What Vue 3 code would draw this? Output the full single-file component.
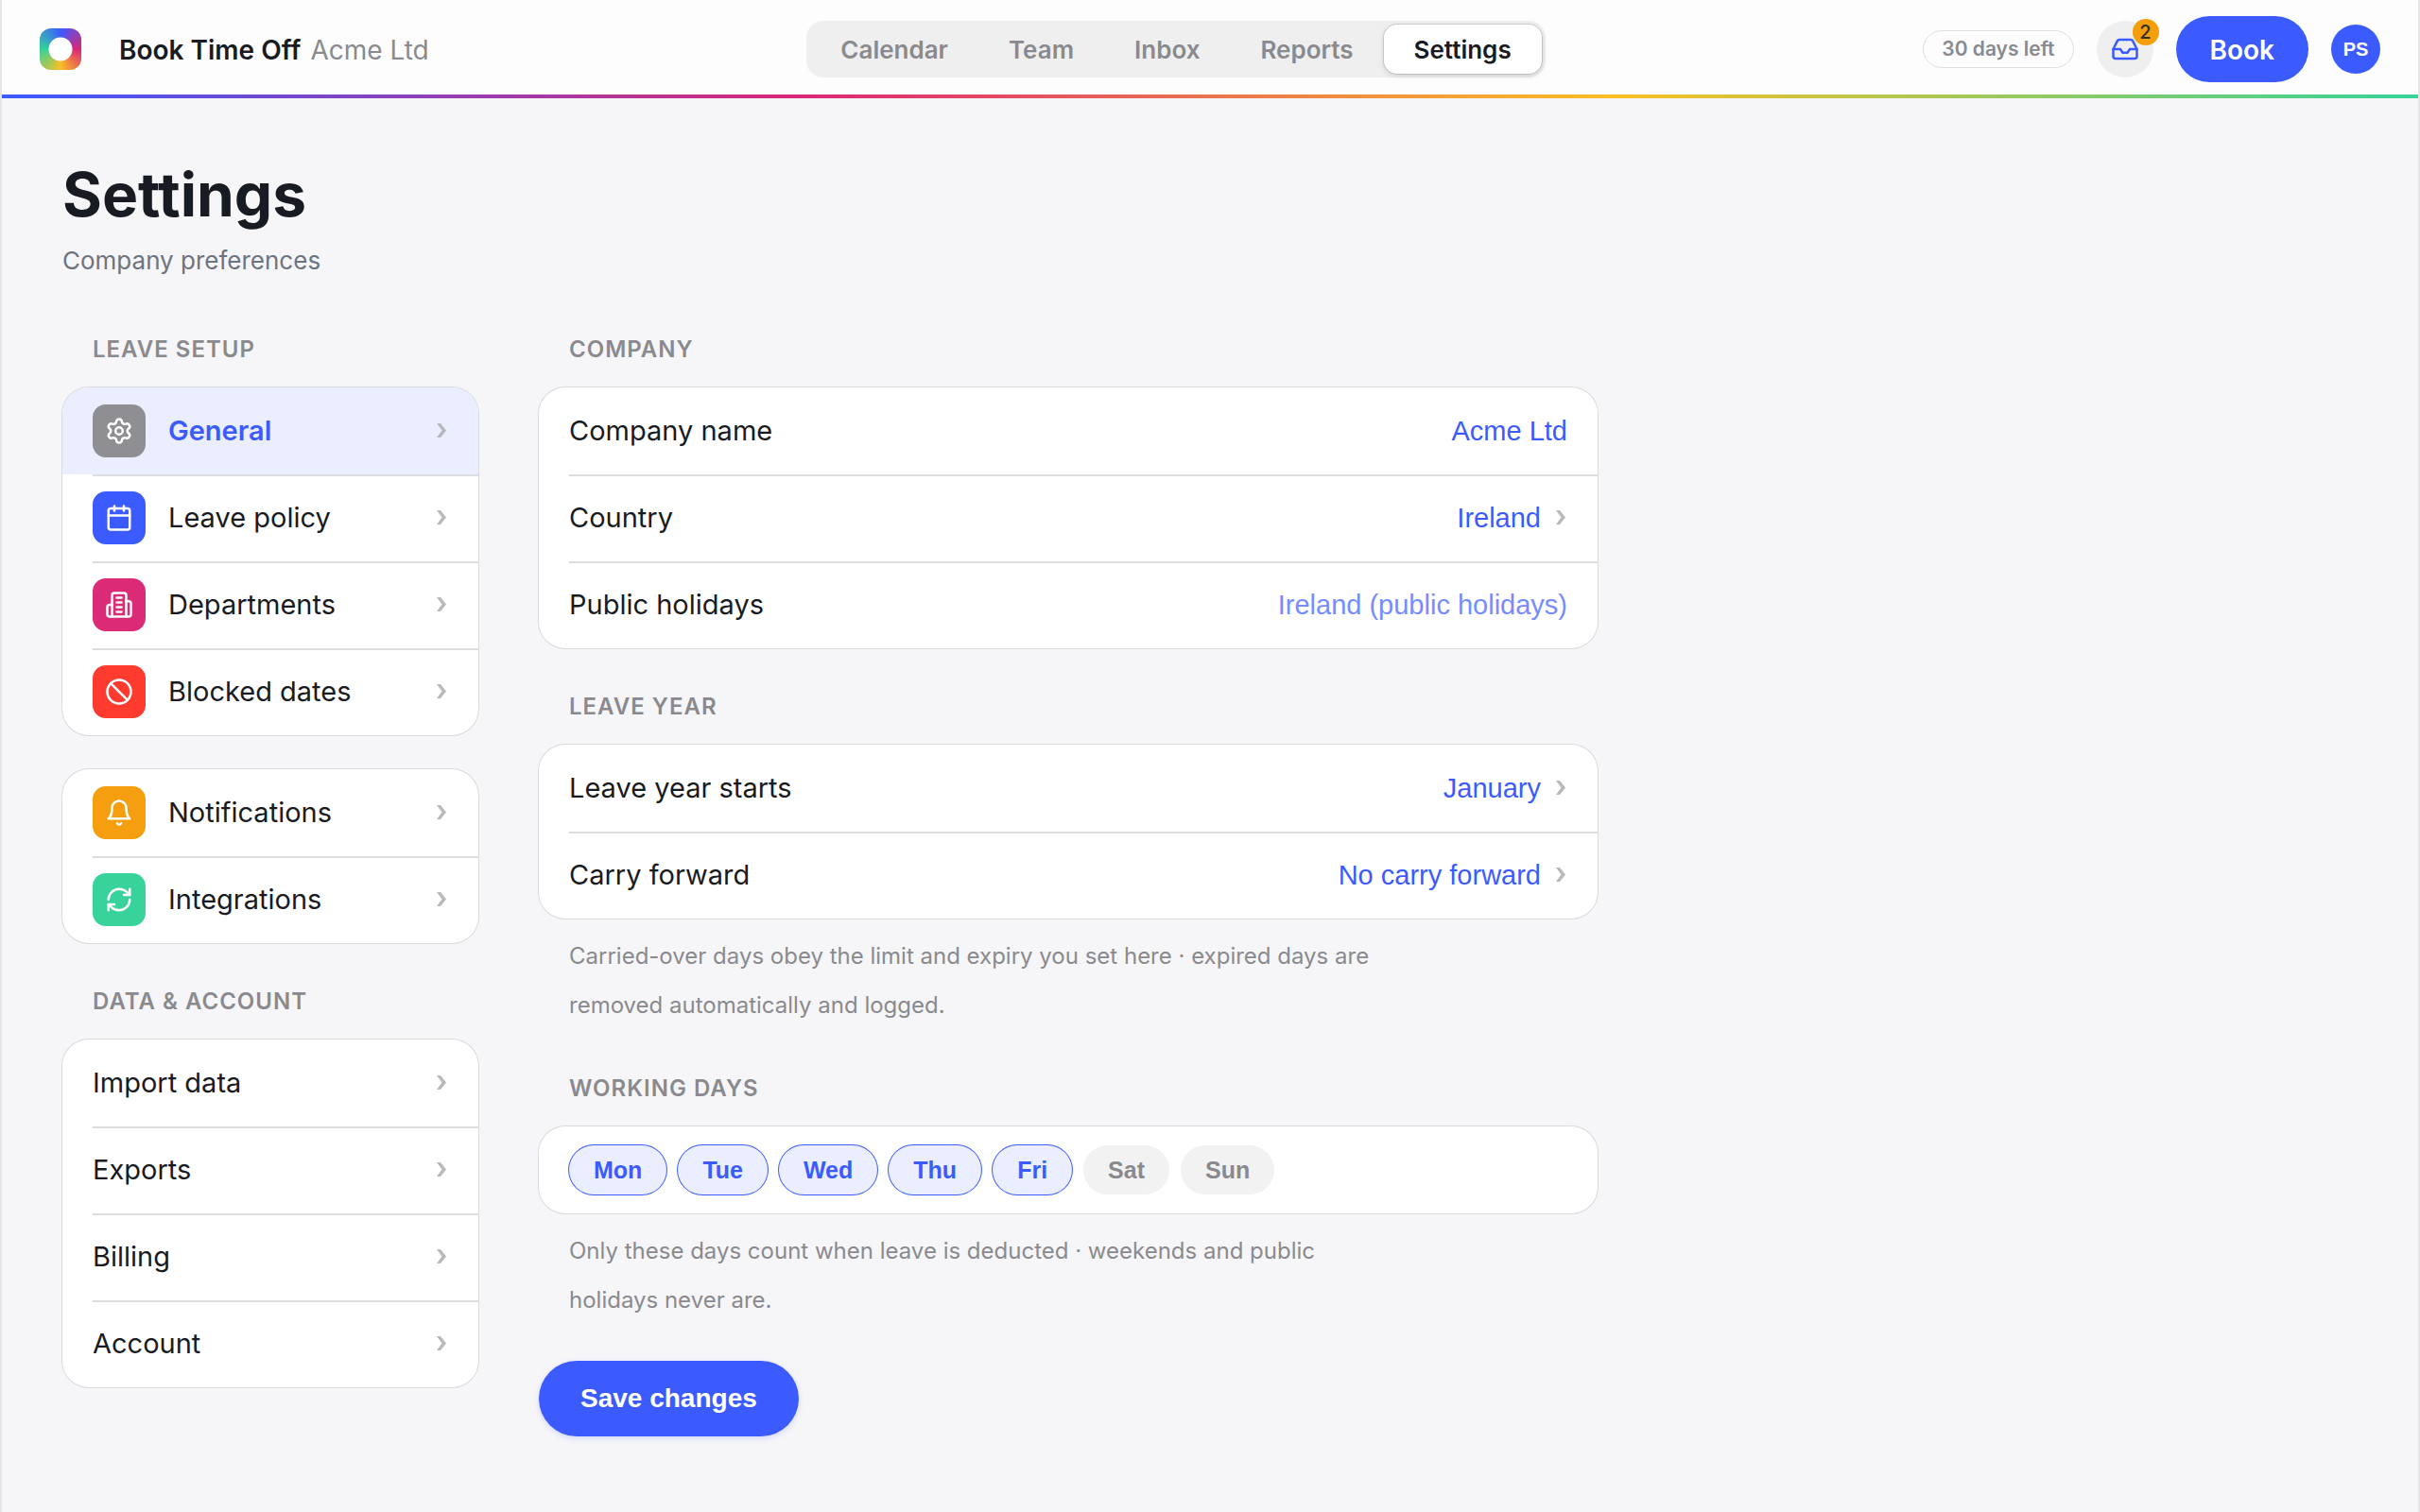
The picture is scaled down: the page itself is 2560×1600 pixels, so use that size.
<template>
  <div class="page">
    <header class="topbar">
      <div class="brand">
        <span class="logo"></span>
        <span class="brand-name">Book Time Off <span class="brand-org">Acme Ltd</span></span>
      </div>

      <nav class="tabs" aria-label="Main">
        <a
          v-for="tab in tabs"
          :key="tab"
          href="#"
          class="tab"
          :class="{ active: tab === activeTab }"
          @click.prevent="activeTab = tab"
        >{{ tab }}</a>
      </nav>

      <div class="actions">
        <span class="days-left">30 days left</span>
        <button class="inbox-btn" type="button" aria-label="Inbox">
          <svg class="icon" viewBox="0 0 24 24">
            <polyline points="22 12 16 12 14 15 10 15 8 12 2 12" />
            <path d="M5.45 5.11 2 12v6a2 2 0 0 0 2 2h16a2 2 0 0 0 2-2v-6l-3.45-6.89A2 2 0 0 0 16.76 4H7.24a2 2 0 0 0-1.79 1.11z" />
          </svg>
          <span class="badge">2</span>
        </button>
        <button class="book-btn" type="button">Book</button>
        <button class="avatar" type="button">PS</button>
      </div>
    </header>
    <div class="rainbow"></div>

    <main class="content">
      <h1>Settings</h1>
      <p class="subtitle">Company preferences</p>

      <div class="columns">
        <!-- Sidebar -->
        <nav class="sidebar" aria-label="Settings">
          <template v-for="(group, i) in groups" :key="i">
            <h2 v-if="group.title" class="section-title">{{ group.title }}</h2>
            <div class="card">
              <a
                v-for="item in group.items"
                :key="item.name"
                href="#"
                class="row"
                :class="{ selected: item.name === section }"
                @click.prevent="section = item.name"
              >
                <span v-if="item.icon" class="tile" :class="'tile--' + item.icon">
                  <svg class="icon" viewBox="0 0 24 24">
                    <path v-for="d in icons[item.icon]" :key="d" :d="d" />
                  </svg>
                </span>
                <span class="row-label">{{ item.name }}</span>
                <svg class="chevron" viewBox="0 0 12 16"><path :d="chevron" /></svg>
              </a>
            </div>
          </template>
        </nav>

        <!-- General -->
        <form class="panel" @submit.prevent>
          <h2 class="section-title">Company</h2>
          <div class="card">
            <div class="row">
              <label class="row-label" for="company">Company name</label>
              <input id="company" v-model="form.company" class="value" type="text">
            </div>
            <div class="row">
              <label class="row-label" for="country">Country</label>
              <select id="country" v-model="form.country" class="value">
                <option>Ireland</option>
                <option>United Kingdom</option>
              </select>
              <svg class="chevron" viewBox="0 0 12 16"><path :d="chevron" /></svg>
            </div>
            <div class="row">
              <label class="row-label" for="holidays">Public holidays</label>
              <input id="holidays" :value="form.country + ' (public holidays)'" class="value" type="text" disabled>
            </div>
          </div>

          <h2 class="section-title">Leave year</h2>
          <div class="card">
            <div class="row">
              <label class="row-label" for="year-start">Leave year starts</label>
              <select id="year-start" v-model="form.yearStart" class="value">
                <option>January</option>
                <option>April</option>
              </select>
              <svg class="chevron" viewBox="0 0 12 16"><path :d="chevron" /></svg>
            </div>
            <div class="row">
              <label class="row-label" for="carry">Carry forward</label>
              <select id="carry" v-model="form.carry" class="value">
                <option>No carry forward</option>
                <option>Up to 5 days</option>
              </select>
              <svg class="chevron" viewBox="0 0 12 16"><path :d="chevron" /></svg>
            </div>
          </div>
          <p class="hint">Carried-over days obey the limit and expiry you set here · expired days are removed automatically and logged.</p>

          <h2 class="section-title">Working days</h2>
          <div class="card days">
            <button
              v-for="day in days"
              :key="day"
              type="button"
              class="day"
              :class="{ on: form.working.includes(day) }"
              :aria-pressed="form.working.includes(day)"
              @click="toggleDay(day)"
            >{{ day }}</button>
          </div>
          <p class="hint">Only these days count when leave is deducted · weekends and public holidays never are.</p>

          <button class="save-btn" type="submit">Save changes</button>
        </form>
      </div>
    </main>
  </div>
</template>

<script setup>
import { ref, reactive } from 'vue'

const tabs = ['Calendar', 'Team', 'Inbox', 'Reports', 'Settings']
const activeTab = ref('Settings')
const section = ref('General')

const groups = [
  {
    title: 'Leave setup',
    items: [
      { name: 'General', icon: 'gear' },
      { name: 'Leave policy', icon: 'calendar' },
      { name: 'Departments', icon: 'building' },
      { name: 'Blocked dates', icon: 'ban' },
    ],
  },
  {
    items: [
      { name: 'Notifications', icon: 'bell' },
      { name: 'Integrations', icon: 'sync' },
    ],
  },
  {
    title: 'Data & account',
    items: [
      { name: 'Import data' },
      { name: 'Exports' },
      { name: 'Billing' },
      { name: 'Account' },
    ],
  },
]

const chevron = 'M0 0h4l6 7.5L4 15H0l5.5-7.5z'

const icons = {
  gear: [
    'M9.671 4.136a2.34 2.34 0 0 1 4.659 0 2.34 2.34 0 0 0 3.319 1.915 2.34 2.34 0 0 1 2.33 4.033 2.34 2.34 0 0 0 0 3.831 2.34 2.34 0 0 1-2.33 4.033 2.34 2.34 0 0 0-3.319 1.915 2.34 2.34 0 0 1-4.659 0 2.34 2.34 0 0 0-3.32-1.915 2.34 2.34 0 0 1-2.33-4.033 2.34 2.34 0 0 0 0-3.831A2.34 2.34 0 0 1 6.35 6.051a2.34 2.34 0 0 0 3.319-1.915',
    'M15 12a3 3 0 1 1-6 0 3 3 0 0 1 6 0z',
  ],
  calendar: [
    'M8 2v4',
    'M16 2v4',
    'M5 4h14a2 2 0 0 1 2 2v14a2 2 0 0 1-2 2H5a2 2 0 0 1-2-2V6a2 2 0 0 1 2-2z',
    'M3 10h18',
  ],
  building: [
    'M6 22V4a2 2 0 0 1 2-2h8a2 2 0 0 1 2 2v18Z',
    'M6 12H4a2 2 0 0 0-2 2v6a2 2 0 0 0 2 2h2',
    'M18 9h2a2 2 0 0 1 2 2v9a2 2 0 0 1-2 2h-2',
    'M10 6h4',
    'M10 10h4',
    'M10 14h4',
    'M10 18h4',
  ],
  ban: [
    'M22 12a10 10 0 1 1-20 0 10 10 0 0 1 20 0z',
    'm4.9 4.9 14.2 14.2',
  ],
  bell: [
    'M6 8a6 6 0 0 1 12 0c0 7 3 9 3 9H3s3-2 3-9',
    'M10.3 21a1.94 1.94 0 0 0 3.4 0',
  ],
  sync: [
    'M3 12a9 9 0 0 1 9-9 9.75 9.75 0 0 1 6.74 2.74L21 8',
    'M21 3v5h-5',
    'M21 12a9 9 0 0 1-9 9 9.75 9.75 0 0 1-6.74-2.74L3 16',
    'M8 16H3v5',
  ],
}

const days = ['Mon', 'Tue', 'Wed', 'Thu', 'Fri', 'Sat', 'Sun']

const form = reactive({
  company: 'Acme Ltd',
  country: 'Ireland',
  yearStart: 'January',
  carry: 'No carry forward',
  working: ['Mon', 'Tue', 'Wed', 'Thu', 'Fri'],
})

function toggleDay(day) {
  const i = form.working.indexOf(day)
  if (i === -1) form.working.push(day)
  else form.working.splice(i, 1)
}
</script>

<style>
body {
  background: #f6f6f9;
}
</style>

<style scoped>
.page {
  font-family: Inter, sans-serif;
  font-size: 29px;
  color: #181b22;
  background: #f6f6f9;
  min-height: 100vh;
  box-sizing: border-box;
  border-left: 2px solid #e5e5e8;
  border-right: 2px solid #e5e5e8;
}

.page *,
.page *::before {
  box-sizing: border-box;
}

button {
  border: none;
  padding: 0;
  cursor: pointer;
  font-family: inherit;
}

.icon {
  width: 30px;
  height: 30px;
  fill: none;
  stroke: currentColor;
  stroke-width: 2;
  stroke-linecap: round;
  stroke-linejoin: round;
}

/* --- Top bar --- */
.topbar {
  display: flex;
  align-items: center;
  justify-content: space-between;
  height: 100px;
  padding: 4px 40px 0;
  background: #fdfdfd;
}

.rainbow {
  height: 4px;
  background: linear-gradient(90deg, #3b5bff, #db2777, #fbbf24, #34d399);
}

.brand {
  display: flex;
  align-items: center;
  gap: 40px;
}

.logo {
  width: 44px;
  height: 44px;
  border-radius: 12px;
  background:
    radial-gradient(circle, #fff 12px, transparent 13px),
    conic-gradient(#3b5bff, #db2777, #fbbf24, #34d399, #3b5bff);
}

.brand-name {
  padding-top: 2px;
  font-size: 28px;
  font-weight: 600;
}

.brand-org {
  margin-left: 3px;
  font-weight: 400;
  color: #8a8a8e;
}

.tabs {
  display: flex;
  padding: 4px;
  border-radius: 18px;
  background: #efeff0;
}

.tab {
  padding: 1px 32px 0;
  border-radius: 14px;
  font-size: 26px;
  line-height: 51px;
  font-weight: 600;
  color: #8a8a8e;
  text-decoration: none;
}

.tab.active {
  background: #fff;
  color: #181b22;
  box-shadow: 0 0 0 1px rgba(0, 0, 0, 0.12), 0 2px 6px rgba(0, 0, 0, 0.14);
}

.actions {
  display: flex;
  align-items: center;
  gap: 24px;
}

.days-left {
  padding: 0 19px;
  border: 1px solid #dedee0;
  border-radius: 20px;
  font-size: 21px;
  line-height: 38px;
  font-weight: 600;
  color: #8a8a8e;
}

.inbox-btn {
  position: relative;
  display: flex;
  align-items: center;
  justify-content: center;
  width: 60px;
  height: 60px;
  border-radius: 50%;
  background: #efeff0;
  color: #3b5bff;
}

.badge {
  position: absolute;
  top: -2px;
  right: -6px;
  width: 28px;
  border-radius: 14px;
  font-size: 20px;
  line-height: 28px;
  font-weight: 500;
  text-align: center;
  background: #f59e0b;
  color: #33302a;
}

.book-btn {
  height: 70px;
  padding: 2px 36px 0;
  border-radius: 35px;
  background: #3b5bff;
  color: #fff;
  font-size: 28px;
  font-weight: 600;
}

.avatar {
  width: 52px;
  height: 52px;
  border-radius: 50%;
  background: #3b5bff;
  color: #fff;
  font-family: 'Liberation Sans', Arial, sans-serif;
  font-size: 20px;
  font-weight: 700;
}

/* --- Content --- */
.content {
  padding: 64px;
}

h1 {
  margin: 0;
  font-size: 64px;
  line-height: 76px;
  font-weight: 700;
}

.subtitle {
  margin: 16px 0 62px;
  font-size: 26px;
  line-height: 32px;
  color: #6d7480;
}

.columns {
  display: grid;
  grid-template-columns: 440px minmax(0, 1120px);
  gap: 64px;
  align-items: start;
}

.section-title {
  margin: 0 32px 24px;
  font-size: 24px;
  line-height: 32px;
  font-weight: 600;
  letter-spacing: 1px;
  text-transform: uppercase;
  color: #8a8a8e;
}

.card {
  border-radius: 28px;
  background: #fff;
  box-shadow: 0 0 0 1px #dadadc;
  overflow: hidden;
}

.card + .card {
  margin-top: 36px;
}

.card + .section-title,
.hint + .section-title {
  margin-top: 46px;
}

.row {
  position: relative;
  display: flex;
  align-items: center;
  gap: 24px;
  min-height: 92px;
  padding: 0 32px;
  color: inherit;
  text-decoration: none;
}

/* hairline starts at the text, not at the card edge */
.row + .row::before {
  content: '';
  position: absolute;
  top: 0;
  left: 32px;
  right: 0;
  height: 2px;
  background: #dedee0;
}

.row-label {
  line-height: 36px;
}

.row.selected {
  background: #eaeeff;
  color: #3b5bff;
}

.row.selected .row-label {
  font-weight: 600;
}

.tile {
  display: flex;
  align-items: center;
  justify-content: center;
  width: 56px;
  height: 56px;
  border-radius: 14px;
  color: #fff;
}

.tile--gear { background: #8e8e93; }
.tile--calendar { background: #3b5bff; }
.tile--building { background: #db2b77; }
.tile--ban { background: #ff3b30; }
.tile--bell { background: #f59e0f; }
.tile--sync { background: #38d39b; }

.chevron {
  width: 12px;
  height: 16px;
  margin-left: auto;
  fill: #b9b9bc;
}

.value {
  flex: 1;
  min-width: 0;
  padding: 0;
  border: none;
  outline: none;
  appearance: none;
  background: none;
  color: #3b5bff;
  font-family: 'Liberation Sans', Arial, sans-serif;
  font-size: 29px;
  text-align: right;
  text-align-last: right;
}

.value:disabled {
  opacity: 0.7;
}

.value + .chevron {
  margin-left: -8px;
}

.hint {
  max-width: 944px;
  margin: 14px 0 0;
  padding: 0 32px;
  font-size: 24px;
  line-height: 52px;
  color: #8a8a8e;
}

.days {
  display: flex;
  flex-wrap: wrap;
  gap: 12px;
  padding: 20px 32px;
}

.day {
  height: 52px;
  padding: 0 26px;
  border-radius: 26px;
  background: #f2f2f3;
  color: #8a8a8e;
  font-family: 'Liberation Sans', Arial, sans-serif;
  font-size: 25px;
  font-weight: 700;
}

.day.on {
  background: #eaeeff;
  color: #3b5bff;
  box-shadow: 0 0 0 1px #3b5bff;
}

.save-btn {
  height: 80px;
  margin-top: 38px;
  padding: 0 44px;
  border-radius: 40px;
  background: #3b5bff;
  color: #fff;
  font-family: 'Liberation Sans', Arial, sans-serif;
  font-size: 28px;
  font-weight: 700;
  box-shadow: 0 2px 6px rgba(59, 91, 255, 0.2);
}

@media (max-width: 1200px) {
  .columns { grid-template-columns: minmax(0, 1fr); }
}
</style>
